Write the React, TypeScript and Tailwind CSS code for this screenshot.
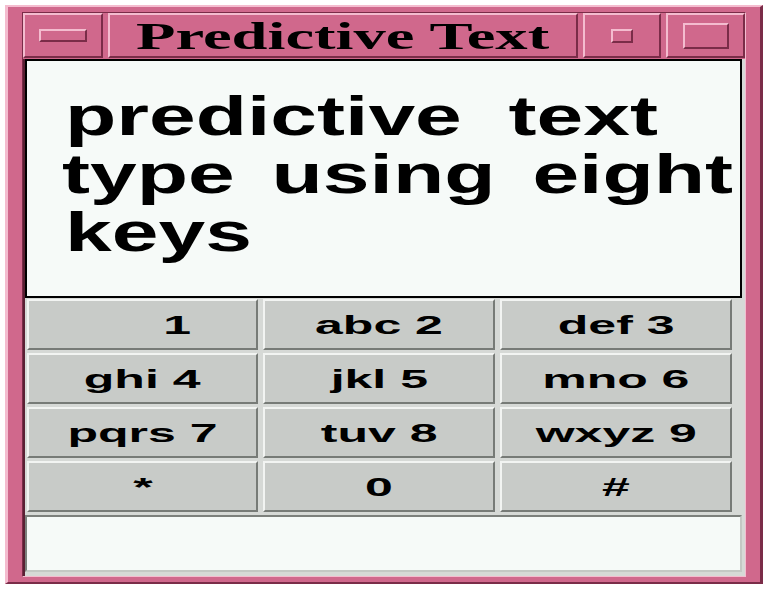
import React from "react";

const keys = [
  ["     1", "abc 2", "def 3"],
  ["ghi 4", "jkl 5", "mno 6"],
  ["pqrs 7", "tuv 8", "wxyz 9"],
  ["*", "0", "#"],
];

// raised pink bevel used by the window manager decorations
const pinkRaised =
  "bg-[#d0688c] border-2 border-t-[#f4bccf] border-l-[#f4bccf] border-b-[#7a2c48] border-r-[#7a2c48]";

const App = () => {
  return (
    <div className="w-[769px] h-[590px] bg-white pl-[5px] pt-[5px]">
      {/* ---------------------- Window frame ---------------------- */}
      <div className="w-[758px] h-[579px] bg-[#d0688c] border-t-2 border-l-[3px] border-b-2 border-r-[3px] border-t-[#f4bccf] border-l-[#f4bccf] border-b-[#7a2c48] border-r-[#7a2c48] px-[14px] py-[5px]">
        <div className="h-full flex flex-col border border-t-[#7a2c48] border-l-[#7a2c48] border-b-[#f4bccf] border-r-[#f4bccf]">
          {/* ---------------------- Title bar ---------------------- */}
          <div className="h-[45px] flex gap-[5px]">
            <div className={`w-[80px] flex items-center justify-center ${pinkRaised}`}>
              <div className="w-[48px] h-[13px] border-2 border-t-[#f4bccf] border-l-[#f4bccf] border-b-[#7a2c48] border-r-[#7a2c48]" />
            </div>
            <div className={`flex-1 flex items-center justify-center overflow-hidden ${pinkRaised}`}>
              <span className="inline-block scale-x-[1.7] font-['Liberation_Serif',serif] font-bold text-[38px] leading-none text-black">
                Predictive Text
              </span>
            </div>
            <div className={`w-[78px] flex items-center justify-center ${pinkRaised}`}>
              <div className="w-[22px] h-[14px] border-2 border-t-[#f4bccf] border-l-[#f4bccf] border-b-[#7a2c48] border-r-[#7a2c48]" />
            </div>
            <div className={`w-[79px] flex items-center justify-center ${pinkRaised}`}>
              <div className="w-[46px] h-[26px] border-2 border-t-[#f4bccf] border-l-[#f4bccf] border-b-[#7a2c48] border-r-[#7a2c48]" />
            </div>
          </div>

          {/* ---------------------- Client area ---------------------- */}
          <div className="flex-1 mt-[1px] bg-[#d6d9d6] flex flex-col border-l-2 border-l-[#5a2034]">
            <div className="h-[239px] mr-[3px] bg-[#f6faf8] border-2 border-black pt-[26px] pl-[38px] overflow-hidden font-['Liberation_Sans',Arial,sans-serif] font-bold text-[56px] leading-[58px] text-black">
              <div className="origin-left scale-x-[1.5] whitespace-pre">predictive  text</div>
              <div className="origin-left scale-x-[1.5] whitespace-pre [word-spacing:9px] -ml-[3px]">type using eight</div>
              <div className="origin-left scale-x-[1.5] whitespace-pre">keys</div>
            </div>

            {/* ---------------------- Keypad ---------------------- */}
            <div className="mt-[1px] pl-[2px] flex flex-col gap-[3px]">
              {keys.map((row, i) => (
                <div key={i} className="flex gap-[5px]">
                  {row.map((label, j) => (
                    <div
                      key={j}
                      className={`${j === 0 ? "w-[231px]" : "w-[232px]"} h-[51px] flex items-center justify-center bg-[#c8cbc8] border-2 border-t-[#f2f4f2] border-l-[#f2f4f2] border-b-[#777b77] border-r-[#777b77]`}
                    >
                      <span className="inline-block scale-x-[2] whitespace-pre font-['Liberation_Sans',Arial,sans-serif] font-bold text-[25px] leading-none text-black pt-[2px]">
                        {label}
                      </span>
                    </div>
                  ))}
                </div>
              ))}
            </div>

            {/* ---------------------- Entry ---------------------- */}
            <div className="mt-[3px] mr-[3px] h-[57px] bg-[#f6faf8] border-2 border-t-[#7c807c] border-l-[#7c807c] border-b-[#c4c8c4] border-r-[#c4c8c4]" />
          </div>
        </div>
      </div>
    </div>
  );
};

export default App;
